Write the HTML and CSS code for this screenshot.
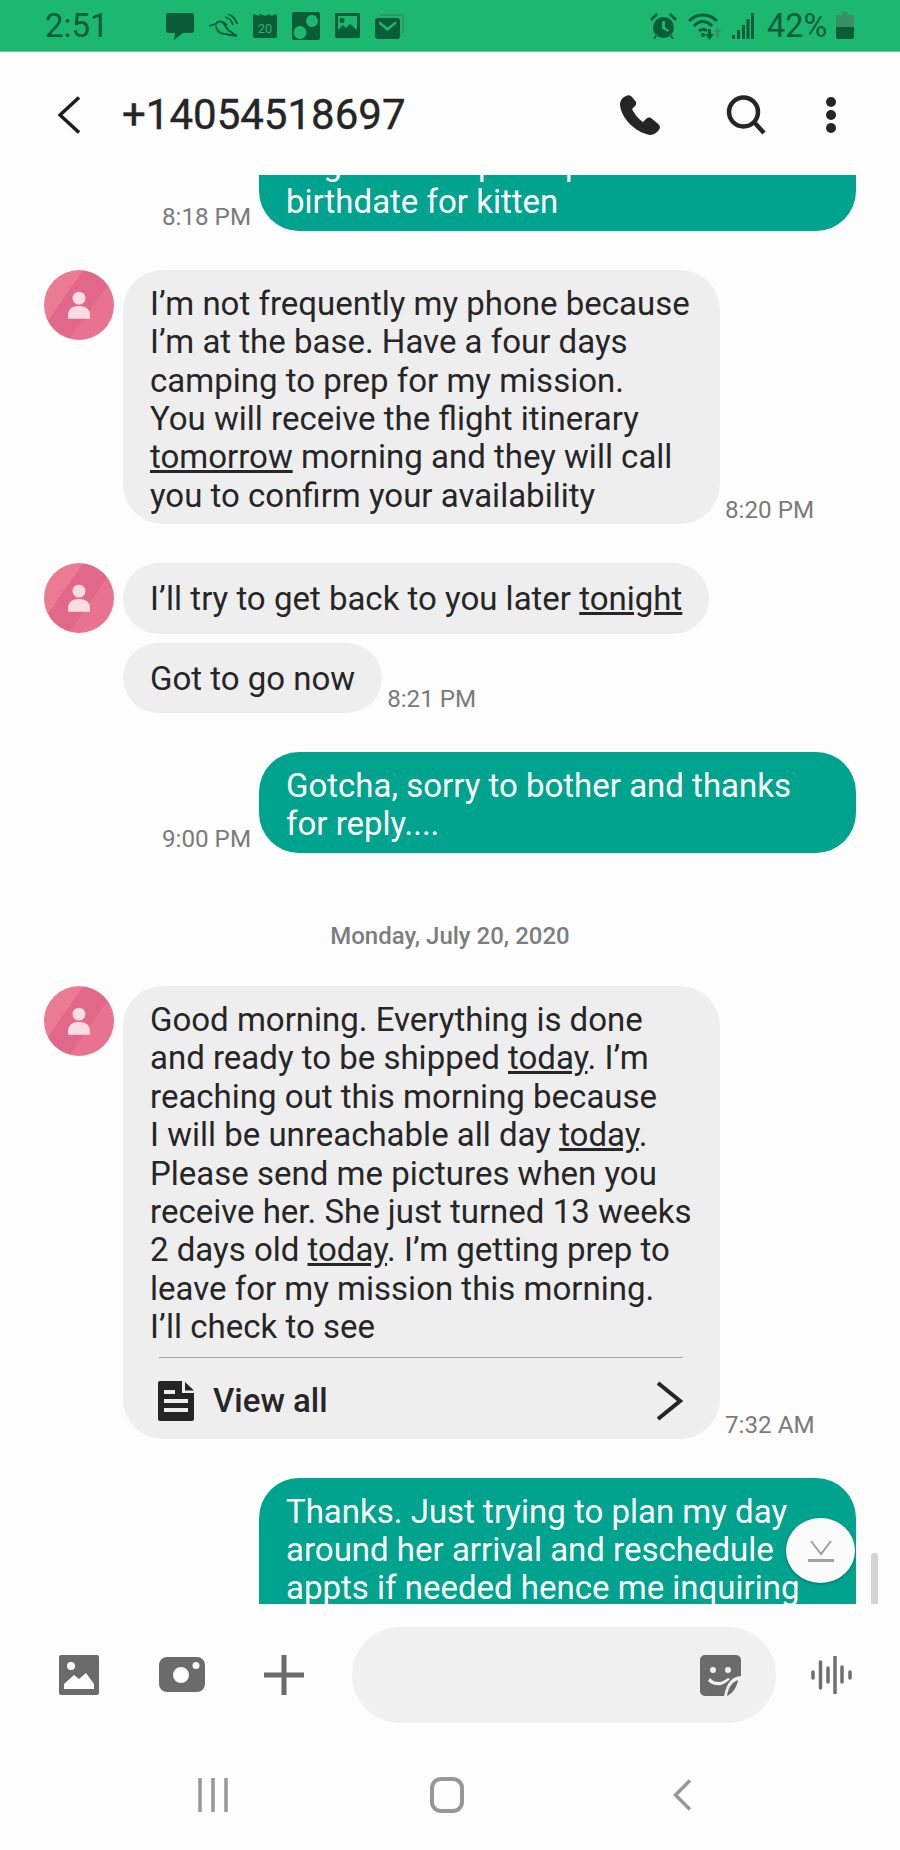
FILE: index.html
```html
<!DOCTYPE html>
<html lang="en">
<head>
<meta charset="utf-8">
<title>+14054518697</title>
<link rel="stylesheet" href="styles.css">
</head>
<body>
<div class="app">
  <svg class="defs" width="0" height="0" aria-hidden="true">
    <symbol id="person" viewBox="0 0 24 30">
      <circle cx="12" cy="7.5" r="7"/>
      <path d="M0 30V26C0 19.5 5 16 12 16S24 19.5 24 26V30Z"/>
    </symbol>
  </svg>

  <div class="status">
    <span class="clock">2:51</span>
    <div class="status-left">
      <svg class="si" width="28" height="28" viewBox="0 0 28 28"><path d="M3 1H25A3 3 0 0 1 28 4V18A3 3 0 0 1 25 21H17L8 28 9 21H3A3 3 0 0 1 0 18V4A3 3 0 0 1 3 1Z"/></svg>
      <svg class="si" width="29" height="24" viewBox="0 0 29 24"><path class="si-line" d="M0 12 7 10C9 6 13 7 15 10L19 16 28 22 16 20C11 20 7 16 7 12M14 8 18 11M16 3C20 4 23 7 24 11M19 0C24 2 27 6 28 10"/></svg>
      <svg class="si" width="24" height="25" viewBox="0 0 24 25"><path d="M2 1 5 3 8 1 12 3 16 1 19 3 22 1A2 2 0 0 1 24 3V23A2 2 0 0 1 22 25H2A2 2 0 0 1 0 23V3A2 2 0 0 1 2 1Z"/><text class="si-num" x="12" y="20" text-anchor="middle">20</text></svg>
      <svg class="si" width="28" height="28" viewBox="0 0 28 28"><path fill-rule="evenodd" d="M2 0H26A2 2 0 0 1 28 2V26A2 2 0 0 1 26 28H2A2 2 0 0 1 0 26V2A2 2 0 0 1 2 0ZM20 3A6 6 0 1 0 20 15 6 6 0 1 0 20 3ZM8 14A6.5 6.500 0 1 0 8 27 6.500 6.500 0 1 0 8 14Z"/></svg>
      <svg class="si" width="25" height="25" viewBox="0 0 25 25"><path fill-rule="evenodd" d="M1 0H24A1 1 0 0 1 25 1V24A1 1 0 0 1 24 25H1A1 1 0 0 1 0 24V1A1 1 0 0 1 1 0ZM3 3V17L8 12 11 15 15 11 22 17V3ZM7 5A2.500 2.500 0 1 1 7 10 2.500 2.500 0 1 1 7 5Z"/></svg>
      <svg class="si" width="29" height="26" viewBox="0 0 29 26"><path class="si-soft" d="M5 1H25A4 4 0 0 1 29 5V20H27V3H5Z"/><path fill-rule="evenodd" d="M3 5H22A3 3 0 0 1 25 8V23A3 3 0 0 1 22 26H3A3 3 0 0 1 0 23V8A3 3 0 0 1 3 5ZM4 11 12.500 18 21 11 21 8 12.500 14.500 4 8Z"/></svg>
    </div>
    <div class="status-right">
      <svg class="si" width="27" height="26" viewBox="0 0 27 26"><path fill-rule="evenodd" d="M13.500 4A10.500 10.500 0 1 1 13.500 25 10.500 10.500 0 0 1 13.500 4ZM12 8V15.500L18 19 19 17 15 14.500V8ZM0 6 6 0 8 2 2 8ZM27 6 21 0 19 2 25 8ZM3 26 6 21 7.500 22 5 26ZM24 26 21 21 19.500 22 22 26Z"/></svg>
      <svg class="si" width="33" height="28" viewBox="0 0 33 28"><path class="si-wave" d="M1 9C9 1 21 1 29 9M6 14C12 8 18 8 24 14M11 19C13 17 17 17 19 19"/><circle cx="15" cy="23" r="2"/><path d="M20 17H23V22H26L21.500 28 17 22H20Z"/><path class="si-soft" d="M29.500 15 33 20H31V26H28V20H26Z"/></svg>
      <svg class="si" width="22" height="26" viewBox="0 0 22 26"><path d="M0 22H3V26H0ZM5 17H8V26H5ZM10 12H13V26H10ZM14.500 6H17.500V26H14.500ZM19 0H22V26H19Z"/></svg>
      <span class="battery-text">42%</span>
      <svg class="si" width="18" height="27" viewBox="0 0 18 27"><path class="si-soft" d="M6 0H12V3H16A2 2 0 0 1 18 5V15H0V5A2 2 0 0 1 2 3H6Z"/><path d="M0 15H18V25A2 2 0 0 1 16 27H2A2 2 0 0 1 0 25Z"/></svg>
    </div>
  </div>

  <header class="topbar">
    <svg class="back" width="23" height="38" viewBox="0 0 23 38"><path d="M21 1.500 2 19 21 36.500"/></svg>
    <h1 class="title">+14054518697</h1>
    <svg class="phone" width="40" height="40" viewBox="0 0 40 40"><path d="M6 1C3 2 0 5 0 10 1 22 14 37 30 40 34 40 38 37 40 33 40 31 39 29 37 28L31 23C29 22 27 23 26 24L23 27C18 24 14 18 12 14L15 11C16 10 16.500 8.500 16 7L12 2C10 0 8 0 6 1Z"/></svg>
    <svg class="search" width="43" height="40" viewBox="0 0 43 40"><circle cx="18.500" cy="17" r="14.500"/><path d="M29 27 39 38"/></svg>
    <svg class="dots" width="14" height="38" viewBox="0 0 14 38"><circle cx="7" cy="6" r="5"/><circle cx="7" cy="19" r="5"/><circle cx="7" cy="32" r="5"/></svg>
  </header>

  <main class="thread">
    <div class="messages">
      <div class="row row-out row-first">
        <span class="time">8:18 PM</span>
        <div class="bubble bubble-out">to get a time pick up and set the<br>birthdate for kitten</div>
      </div>

      <div class="row row-in gap-first">
        <div class="avatar"><svg class="person" width="22" height="28"><use href="#person"/></svg></div>
        <div class="bubble bubble-in bubble-wide">I’m not frequently my phone because<br>I’m at the base. Have a four days<br>camping to prep for my mission.<br>You will receive the flight itinerary<br><u>tomorrow</u> morning and they will call<br>you to confirm your availability</div>
        <span class="time">8:20 PM</span>
      </div>

      <div class="row row-in gap-group">
        <div class="avatar"><svg class="person" width="22" height="28"><use href="#person"/></svg></div>
        <div class="bubble bubble-in bubble-single">I’ll try to get back to you later <u>tonight</u></div>
      </div>
      <div class="row row-in row-cont">
        <div class="bubble bubble-in bubble-single">Got to go now</div>
        <span class="time">8:21 PM</span>
      </div>

      <div class="row row-out gap-group">
        <span class="time">9:00 PM</span>
        <div class="bubble bubble-out">Gotcha, sorry to bother and thanks<br>for reply....</div>
      </div>

      <div class="date">Monday, July 20, 2020</div>

      <div class="row row-in">
        <div class="avatar"><svg class="person" width="22" height="28"><use href="#person"/></svg></div>
        <div class="bubble bubble-in bubble-wide bubble-long">
          <div>Good morning. Everything is done<br>and ready to be shipped <u>today</u>. I’m<br>reaching out this morning because<br>I will be unreachable all day <u>today</u>.<br>Please send me pictures when you<br>receive her. She just turned 13 weeks<br>2 days old <u>today</u>. I’m getting prep to<br>leave for my mission this morning.<br>I’ll check to see</div>
          <div class="viewall">
            <svg class="doc" width="36" height="40" viewBox="0 0 36 40"><path fill-rule="evenodd" d="M2 0H24V12H36V38A2 2 0 0 1 34 40H2A2 2 0 0 1 0 38V2A2 2 0 0 1 2 0ZM6 9V13H17V9ZM6 18V22H30V18ZM6 27V31H30V27Z"/><path d="M27 1 36 9.500H27Z"/></svg>
            <span class="viewall-label">View all</span>
            <svg class="chev" width="28" height="40" viewBox="0 0 28 40"><path d="M3 2 25 20 3 38"/></svg>
          </div>
        </div>
        <span class="time">7:32 AM</span>
      </div>

      <div class="row row-out gap-first">
        <div class="bubble bubble-out bubble-cut">Thanks. Just trying to plan my day<br>around her arrival and reschedule<br>appts if needed hence me inquiring</div>
      </div>
    </div>

    <button class="fab" aria-label="Scroll to bottom"><svg width="26" height="22" viewBox="0 0 26 22"><path class="fab-v" d="M3 1 13 14 23 1"/><path class="fab-bar" d="M0 20.500H26"/></svg></button>
    <div class="scrollbar"></div>
  </main>

  <div class="composer">
    <svg class="cmp" width="40" height="40" viewBox="0 0 40 40"><path fill-rule="evenodd" d="M2 0H38A2 2 0 0 1 40 2V38A2 2 0 0 1 38 40H2A2 2 0 0 1 0 38V2A2 2 0 0 1 2 0ZM12 7A4 4 0 1 0 12 15 4 4 0 1 0 12 7ZM5 34H35V29L27 18 20 24 15 20 5 29Z"/></svg>
    <svg class="cmp" width="46" height="35" viewBox="0 0 46 35"><path fill-rule="evenodd" d="M8 0H38A8 8 0 0 1 46 8V27A8 8 0 0 1 38 35H8A8 8 0 0 1 0 27V8A8 8 0 0 1 8 0ZM37 5A3.500 3.500 0 1 0 37 12 3.500 3.500 0 1 0 37 5ZM22 10A8 8 0 1 0 22 26 8 8 0 1 0 22 10Z"/></svg>
    <svg class="cmp" width="40" height="40" viewBox="0 0 40 40"><path d="M17.500 0H22.500V17.500H40V22.500H22.500V40H17.500V22.500H0V17.500H17.500Z"/></svg>
    <div class="input">
      <svg class="cmp" width="41" height="41" viewBox="0 0 41 41"><path fill-rule="evenodd" d="M5 0H36A5 5 0 0 1 41 5V21C32 22 27 27 24 41H5A5 5 0 0 1 0 36V5A5 5 0 0 1 5 0ZM13 12A3 3 0 1 0 13 18 3 3 0 1 0 13 12ZM28 12A3 3 0 1 0 28 18 3 3 0 1 0 28 12ZM10 23 8 26C12 30 17 31 21 30 24 29 28 26 30 24L28 23C25 25 22 27 19 27 15 27 13 26 10 23Z"/><path d="M27 41C28 33 32 27 38 25 37 32 33 38 27 41Z"/></svg>
    </div>
    <svg class="voice" width="42" height="38" viewBox="0 0 42 38"><path d="M2 16V22M9.500 6V32M17 12V26M24 1V37M31 11V26M39 16V22"/></svg>
  </div>

  <nav class="navbar">
    <svg class="nav-lines" width="30" height="34" viewBox="0 0 30 34"><path d="M2 0V34M15 0V34M28 0V34"/></svg>
    <div class="nav-home"></div>
    <svg class="nav-back" width="19" height="32" viewBox="0 0 19 32"><path d="M17 1.500 2.500 16 17 30.500"/></svg>
  </nav>
</div>
</body>
</html>
```

FILE: styles.css
```css
* { box-sizing: border-box; }
html, body { margin: 0; padding: 0; }
body { font-family: Roboto, "Liberation Sans", sans-serif; background: #fdfdfd; }
.defs { position: absolute; }
.app { width: 900px; height: 1850px; display: flex; flex-direction: column; overflow: hidden; background: #fdfdfd; }

/* status bar */
.status { height: 52px; flex: none; background: #1cb870; color: #0b5c38; display: flex; align-items: center; padding-left: 45px; border-bottom: 1px solid #5fcf9a; }
.clock { font-size: 33px; width: 121px; }
.status-left { display: flex; align-items: center; gap: 15px; width: 484px; }
.status-right { display: flex; align-items: center; gap: 11px; }
.si { fill: #0b5c38; flex: none; }
.si-line { fill: none; stroke: #0b5c38; stroke-width: 1.8; }
.si-wave { fill: none; stroke: #0b5c38; stroke-width: 3; }
.si-soft { fill: #3a8f63; }
.si-num { fill: #1cb870; font-size: 13px; font-family: Roboto, sans-serif; }
.battery-text { font-size: 32.5px; margin: 0 -2px 0 2px; }

/* top bar */
.topbar { height: 123px; flex: none; display: flex; align-items: center; padding: 2px 0 0 58px; color: #252525; }
.back { fill: none; stroke: #1c1c1c; stroke-width: 3.5; flex: none; }
.title { font-size: 42px; font-weight: 400; margin: 0 0 0 41px; width: 498px; -webkit-text-stroke: 0.4px #252525; }
.phone { fill: #252525; flex: none; }
.search { fill: none; stroke: #252525; stroke-width: 4.5; margin-left: 65px; flex: none; }
.dots { fill: #252525; margin-left: 56px; flex: none; }

/* thread */
.thread { height: 1429px; flex: none; position: relative; overflow: hidden; }
.messages { display: flex; flex-direction: column; margin-top: -45px; padding: 0 44px; }
.row { display: flex; align-items: flex-end; gap: 5px; }
.row-out { justify-content: flex-end; gap: 8px; }
.row-in { align-items: flex-start; gap: 9px; }
.row-in .time { align-self: flex-end; margin-left: -4px; }
.row-cont { padding-left: 79px; margin-top: 9px; }
.gap-first { margin-top: 39px; }
.gap-group { margin-top: 39px; }
.bubble { font-size: 33px; line-height: 38.4px; padding: 15px 27px 9px; border-radius: 40px; color: #262626; flex: none; }
.bubble-out { background: #00a38d; color: #fff; width: 597px; }
.bubble-in { background: #eeeeee; }
.bubble-wide { width: 597px; }
.bubble-single { padding: 17px 27px 15px; }
.bubble-long { padding-bottom: 0; }
.bubble-cut { padding-bottom: 60px; }
.avatar { width: 70px; height: 70px; border-radius: 50%; flex: none; display: flex; align-items: center; justify-content: center; background: linear-gradient(125deg, #ea7b93 0 33%, #e1688a 33% 62%, #e87290 62% 100%); }
.person { fill: #f9dde3; }
.time { font-size: 24.2px; color: #7a7a7a; line-height: 28px; white-space: nowrap; }
.date { font-size: 24px; font-weight: 500; color: #7d7d7d; text-align: center; margin: 70px 0 37px; line-height: 26px; }

.viewall { display: flex; align-items: center; margin: 10px 10px 0 9px; height: 82px; padding-top: 6px; border-top: 1px solid #a8a8a8; }
.doc { fill: #252525; flex: none; margin-left: -1px; }
.viewall-label { font-weight: 500; margin-left: 19px; flex: 1; }
.chev { fill: none; stroke: #252525; stroke-width: 4; flex: none; }

.fab { position: absolute; left: 786px; top: 1343px; width: 69px; height: 65px; padding: 0; border: 0; border-radius: 50%; background: #fafafa; box-shadow: 0 1px 3px rgba(0,0,0,.3); display: flex; align-items: center; justify-content: center; }
.fab-v { fill: none; stroke: #a0a0a0; stroke-width: 2; }
.fab-bar { fill: none; stroke: #a0a0a0; stroke-width: 3; }
.scrollbar { position: absolute; left: 871px; top: 1378px; width: 7px; height: 51px; background: #d4d4d4; border-radius: 3px 3px 0 0; }

/* composer */
.composer { height: 156px; flex: none; display: flex; align-items: flex-start; padding: 23px 0 0 59px; }
.cmp { fill: #6b6b6b; flex: none; }
.composer > .cmp { margin-top: 28px; }
.composer > .cmp:nth-of-type(1) { margin-right: 60px; }
.composer > .cmp:nth-of-type(2) { margin-top: 30px; margin-right: 59px; }
.composer > .cmp:nth-of-type(3) { margin-right: 48px; }
.input { width: 424px; height: 96px; border-radius: 48px; background: #f0f0f0; flex: none; display: flex; align-items: center; justify-content: flex-end; padding-right: 35px; }
.voice { fill: none; stroke: #6f6f6f; stroke-width: 3.5; stroke-linecap: round; margin: 29px 0 0 35px; flex: none; }

/* nav */
.navbar { height: 90px; flex: none; display: flex; align-items: flex-start; padding: 17px 0 0 198px; }
.nav-lines { fill: none; stroke: #979797; stroke-width: 3.5; margin-top: 1px; flex: none; }
.nav-home { width: 34px; height: 36px; border: 4.5px solid #979797; border-radius: 11px; margin-left: 202px; flex: none; }
.nav-back { fill: none; stroke: #979797; stroke-width: 3.5; margin: 2px 0 0 209px; flex: none; }
```
